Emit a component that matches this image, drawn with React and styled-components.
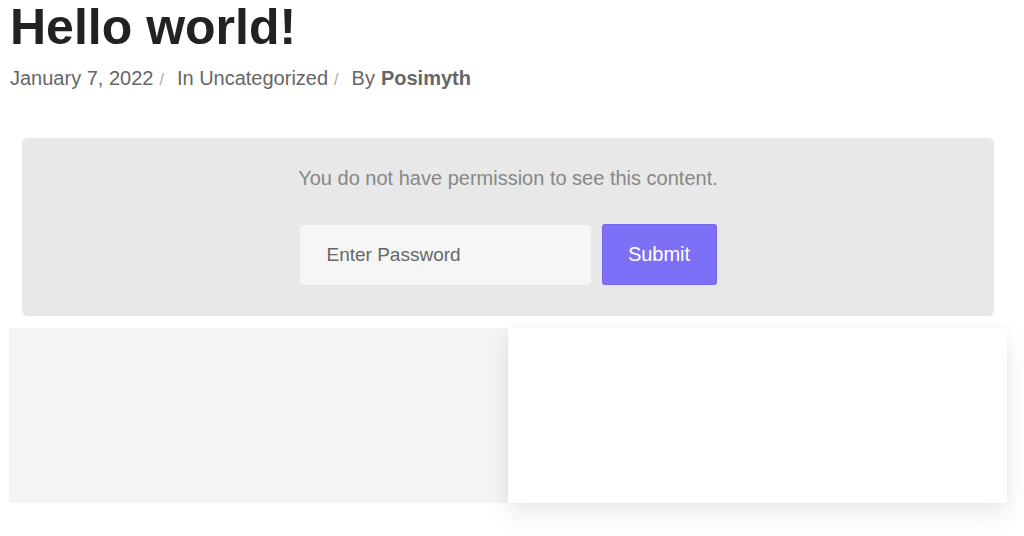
import React from "react";
import styled, { createGlobalStyle } from "styled-components";

const Global = createGlobalStyle`
  html, body { margin: 0; padding: 0; background: #fff; }
  body { font-family: "Liberation Sans", Arial, Helvetica, sans-serif; }
  * { box-sizing: border-box; }
`;

const Page = styled.div`
  width: 1024px;
  height: 536px;
  overflow: hidden;
  display: flex;
  flex-direction: column;
`;

const Title = styled.h1`
  margin: 2px 0 0 10px;
  font-size: 50px;
  line-height: 50px;
  font-weight: 700;
  color: #222;
`;

const Meta = styled.div`
  margin: 14px 0 0 10px;
  font-size: 20px;
  line-height: 24px;
  color: #666;
  display: flex;
  align-items: baseline;
`;

const Sep = styled.span`
  color: #aaa;
  font-size: 16px;
  margin: 0 13px 0 6px;
`;

const Author = styled.b`
  color: #666;
  font-weight: 700;
  margin-left: 6px;
`;

const LockBox = styled.section`
  margin: 46px 0 0 22px;
  width: 972px;
  height: 178px;
  background: #e8e8e8;
  border-radius: 6px;
  display: flex;
  flex-direction: column;
  align-items: center;
  padding-top: 28px;
`;

const Message = styled.p`
  margin: 0;
  font-size: 20px;
  line-height: 24px;
  color: #878787;
`;

const Form = styled.form`
  margin-top: 35px;
  display: flex;
  align-items: flex-start;
  gap: 11px;
`;

const Input = styled.input`
  width: 291px;
  height: 60px;
  border: none;
  outline: none;
  border-radius: 4px;
  background: #f6f6f6;
  padding: 0 0 0 27px;
  font-family: inherit;
  font-size: 19px;
  color: #666;
  &::placeholder { color: #666; }
`;

const Button = styled.button`
  width: 115px;
  height: 61px;
  margin-top: -1px;
  border: 1px dotted #6d5fe8;
  border-radius: 3px;
  background: #7d6ff6;
  color: #fff;
  font-family: inherit;
  font-size: 20px;
  cursor: pointer;
`;

const Panels = styled.div`
  margin: 12px 0 0 9px;
  display: flex;
  width: 998px;
  height: 175px;
`;

const Panel = styled.div`
  flex: 1;
  background: ${(p) => (p.$raised ? "#fff" : "#f4f4f4")};
  box-shadow: ${(p) =>
    p.$raised ? "0 12px 24px rgba(0,0,0,0.08), 0 0 10px rgba(0,0,0,0.04)" : "none"};
  position: relative;
`;

export default function App() {
  return (
    <Page>
      <Global />
      <Title>Hello world!</Title>
      <Meta>
        January 7, 2022<Sep>/</Sep>In Uncategorized<Sep>/</Sep>By<Author>Posimyth</Author>
      </Meta>
      <LockBox>
        <Message>You do not have permission to see this content.</Message>
        <Form onSubmit={(e) => e.preventDefault()}>
          <Input type="password" placeholder="Enter Password" />
          <Button type="submit">Submit</Button>
        </Form>
      </LockBox>
      <Panels>
        <Panel />
        <Panel $raised />
      </Panels>
    </Page>
  );
}
